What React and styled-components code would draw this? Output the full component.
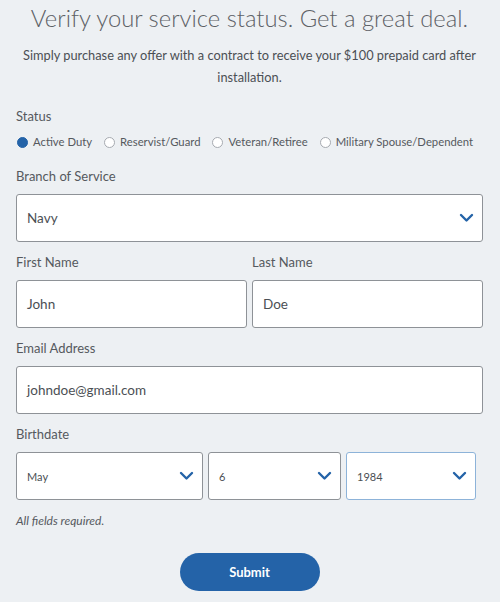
import React, { useState } from "react";
import styled, { createGlobalStyle } from "styled-components";

const GlobalStyle = createGlobalStyle`
  html, body {
    margin: 0;
    padding: 0;
    background: #edf0f3;
  }
  body {
    font-family: Lato, "Open Sans", Arial, sans-serif;
    color: #4b4f54;
  }
`;

const statuses = [
  "Active Duty",
  "Reservist/Guard",
  "Veteran/Retiree",
  "Military Spouse/Dependent",
];

const Chevron = () => (
  <svg width="15" height="10" viewBox="0 0 15 10">
    <path
      d="M2 2 L7.5 7.5 L13 2"
      fill="none"
      stroke="#2463a8"
      strokeWidth="2.4"
      strokeLinecap="round"
      strokeLinejoin="round"
    />
  </svg>
);

const App = () => {
  const [status, setStatus] = useState(0);

  return (
    <>
      <GlobalStyle />
      <Page>
        <Title>Verify your service status. Get a great deal.</Title>
        <Intro>
          Simply purchase any offer with a contract to receive your $100 prepaid card after
          installation.
        </Intro>

        <StatusField>
          <Label>Status</Label>
          <RadioRow>
            {statuses.map((s, i) => (
              <RadioItem key={s} onClick={() => setStatus(i)}>
                <Dot checked={status === i} />
                {s}
              </RadioItem>
            ))}
          </RadioRow>
        </StatusField>

        <Field>
          <Label>Branch of Service</Label>
          <Box>
            <span>Navy</span>
            <Chevron />
          </Box>
        </Field>

        <Row>
          <Field>
            <Label>First Name</Label>
            <Box>John</Box>
          </Field>
          <Field>
            <Label>Last Name</Label>
            <Box>Doe</Box>
          </Field>
        </Row>

        <Field>
          <Label>Email Address</Label>
          <Box>johndoe@gmail.com</Box>
        </Field>

        <Field>
          <Label>Birthdate</Label>
          <DateRow>
            <Box small>
              <span>May</span>
              <Chevron />
            </Box>
            <Box small>
              <span>6</span>
              <Chevron />
            </Box>
            <Box small focused>
              <span>1984</span>
              <Chevron />
            </Box>
          </DateRow>
        </Field>

        <Note>All fields required.</Note>

        <Actions>
          <Submit>Submit</Submit>
        </Actions>
      </Page>
    </>
  );
};

export default App;

const Page = styled.div`
  width: 500px;
  height: 602px;
  box-sizing: border-box;
  padding: 0 17px 0 16px;
  overflow: hidden;
`;

const Title = styled.h1`
  margin: 2px 0 0;
  text-align: center;
  font-size: 23.8px;
  font-weight: 300;
  line-height: 32px;
  color: #5d6166;
  white-space: nowrap;
`;

const Intro = styled.p`
  margin: 10px -6px 0;
  text-align: center;
  font-size: 12.8px;
  line-height: 22px;
  color: #4b4f54;
`;

const Field = styled.div`
  display: flex;
  flex-direction: column;
  flex: 1;
  min-width: 0;
  margin-top: 11px;
`;

const StatusField = styled(Field)`
  margin-top: 19px;
`;

const Label = styled.div`
  font-size: 13px;
  line-height: 18px;
  color: #55595e;
  margin-bottom: 9px;
`;

const RadioRow = styled.div`
  display: flex;
  gap: 12px;
  height: 16px;
  margin: 0 -6px 6px 1px;
`;

const RadioItem = styled.label`
  display: flex;
  align-items: center;
  gap: 5px;
  flex-shrink: 0;
  white-space: nowrap;
  font-size: 11.3px;
  color: #55595e;
  cursor: pointer;
  line-height: 16px;
`;

const Dot = styled.span`
  width: 11px;
  height: 11px;
  box-sizing: border-box;
  border-radius: 50%;
  background: ${(p) => (p.checked ? "#2463a8" : "#fff")};
  border: 1px solid ${(p) => (p.checked ? "#2463a8" : "#a6aab0")};
`;

const Box = styled.div`
  height: 48px;
  box-sizing: border-box;
  display: flex;
  align-items: center;
  justify-content: space-between;
  padding: 0 8px 0 10px;
  background: #fff;
  border: 1px solid ${(p) => (p.focused ? "#8db3d9" : "#8e9297")};
  border-radius: 3px;
  font-size: ${(p) => (p.small ? "11px" : "13.5px")};
  color: #4b4f54;
`;

const Row = styled.div`
  display: flex;
  gap: 5px;
`;

const DateRow = styled.div`
  display: grid;
  grid-template-columns: 187px 133px 130px;
  gap: 5px;
`;

const Note = styled.div`
  margin-top: 13px;
  font-size: 12px;
  font-style: italic;
  color: #55595e;
`;

const Actions = styled.div`
  display: flex;
  justify-content: center;
  margin-top: 25px;
`;

const Submit = styled.button`
  width: 140px;
  height: 38px;
  border: none;
  border-radius: 19px;
  background: #2463a8;
  color: #fff;
  font-family: inherit;
  font-size: 13px;
  font-weight: 700;
  cursor: pointer;
`;
